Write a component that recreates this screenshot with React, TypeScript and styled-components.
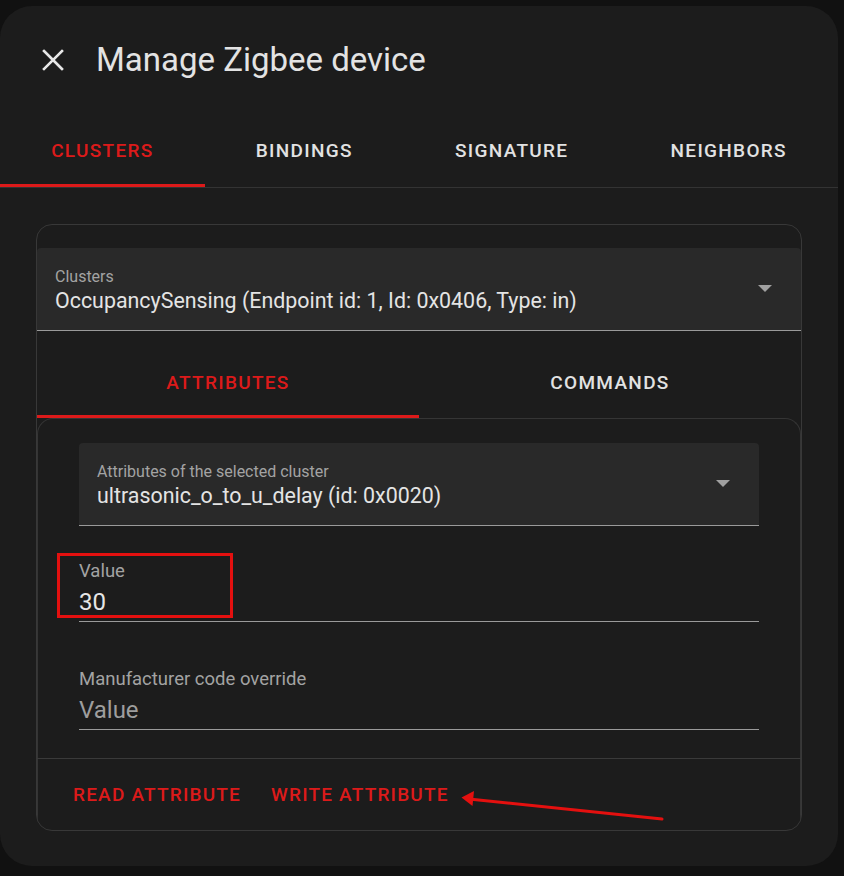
import React from "react";
import styled, { createGlobalStyle } from "styled-components";

const Global = createGlobalStyle`
  html, body { margin: 0; padding: 0; background: #111111; }
  body { font-family: Roboto, "Noto Sans", "Liberation Sans", sans-serif; -webkit-font-smoothing: antialiased; }
  #root { width: 844px; height: 876px; overflow: hidden; }
`;

const RED = "#dc1a1a";

const Dialog = styled.div`
  position: relative;
  margin-top: 6px;
  width: 838px;
  height: 860px;
  background: #1c1c1c;
  border-radius: 32px;
  box-sizing: border-box;
  overflow: hidden;
  color: #e2e2e2;
`;

const Header = styled.div`
  height: 108px;
  display: flex;
  align-items: center;
  padding-left: 42px;
  gap: 32px;
`;

const CloseIcon = styled.svg`
  width: 22px;
  height: 22px;
  flex: none;
`;

const Title = styled.h1`
  margin: 0;
  font-size: 33px;
  font-weight: 400;
  line-height: 40px;
  color: #e3e3e3;
`;

const TabBar = styled.div<{ $height: number; $border?: boolean }>`
  display: flex;
  height: ${(p) => p.$height}px;
  border-bottom: ${(p) => (p.$border ? "1px solid #333" : "none")};
`;

const Tab = styled.div<{ $active?: boolean; $equal?: boolean; $padTop?: number }>`
  position: relative;
  flex: ${(p) => (p.$equal ? "1 1 0" : "1 1 auto")};
  display: flex;
  align-items: center;
  justify-content: center;
  padding-top: ${(p) => p.$padTop ?? 0}px;
  box-sizing: border-box;
  font-size: 19px;
  font-weight: 500;
  letter-spacing: 1.3px;
  text-transform: uppercase;
  color: ${(p) => (p.$active ? RED : "#e2e2e2")};
  &::after {
    content: "";
    display: ${(p) => (p.$active ? "block" : "none")};
    position: absolute;
    left: 0;
    right: 0;
    bottom: 0;
    height: 3px;
    background: ${RED};
  }
`;

const Content = styled.div`
  padding: 36px 36px 0;
`;

const Card = styled.div`
  border: 1px solid #383838;
  border-radius: 16px;
  padding-top: 23px;
  overflow: hidden;
  height: 607px;
  box-sizing: border-box;
`;

const Select = styled.div`
  position: relative;
  height: 83px;
  box-sizing: border-box;
  background: #292929;
  border-bottom: 1px solid #9a9a9a;
  border-radius: 4px 4px 0 0;
  padding: 18px 18px 0;
`;

const SelectLabel = styled.div`
  font-size: 16px;
  line-height: 21px;
  color: #a3a3a3;
  white-space: nowrap;
`;

const SelectValue = styled.div`
  font-size: 21.4px;
  line-height: 28px;
  color: #e4e4e4;
  white-space: nowrap;
`;

const Caret = styled.span`
  position: absolute;
  right: 29px;
  top: 50%;
  margin-top: -4px;
  width: 0;
  height: 0;
  border-left: 7px solid transparent;
  border-right: 7px solid transparent;
  border-top: 7px solid #a0a0a0;
`;

const InnerCard = styled.div`
  border: 1px solid #353535;
  border-bottom: none;
  border-radius: 16px 16px 0 0;
  height: 420px;
  display: flex;
  flex-direction: column;
`;

const InnerBody = styled.div`
  padding: 24px 41px 0;
  display: flex;
  flex-direction: column;
`;

const TextField = styled.div<{ $mt: number }>`
  position: relative;
  margin-top: ${(p) => p.$mt}px;
  height: 78px;
  box-sizing: border-box;
  padding-top: 17px;
  border-bottom: 1px solid #9a9a9a;
`;

const InputLabel = styled.div`
  font-size: 18.5px;
  line-height: 21px;
  color: #a3a3a3;
  white-space: nowrap;
`;

const InputValue = styled.div<{ $placeholder?: boolean }>`
  margin-top: 6px;
  font-size: 24px;
  line-height: 28px;
  color: ${(p) => (p.$placeholder ? "#9e9e9e" : "#e6e6e6")};
  white-space: nowrap;
`;

const Highlight = styled.div`
  position: absolute;
  left: -22px;
  top: 9px;
  width: 176px;
  height: 65px;
  box-sizing: border-box;
  border: 3px solid #e4100f;
`;

const Actions = styled.div`
  margin-top: 28px;
  border-top: 1px solid #3a3a3a;
  height: 70px;
  display: flex;
  align-items: center;
  gap: 30px;
  padding-left: 36px;
  margin-left: -1px;
  margin-right: -1px;
`;

const TextButton = styled.button`
  background: none;
  border: none;
  padding: 0;
  font-family: inherit;
  font-size: 19px;
  font-weight: 500;
  letter-spacing: 1.2px;
  text-transform: uppercase;
  color: ${RED};
  cursor: pointer;
`;

const Pointer = styled.svg`
  position: absolute;
  left: 455px;
  top: 778px;
  width: 215px;
  height: 42px;
  overflow: visible;
`;

export default function App() {
  return (
    <>
      <Global />
      <Dialog>
        <Header>
          <CloseIcon viewBox="0 0 22 22">
            <path d="M2 2 L20 20 M20 2 L2 20" stroke="#e6e6e6" strokeWidth="2.6" strokeLinecap="square" fill="none" />
          </CloseIcon>
          <Title>Manage Zigbee device</Title>
        </Header>
        <TabBar $height={73} $border>
          <Tab $active>Clusters</Tab>
          <Tab>Bindings</Tab>
          <Tab>Signature</Tab>
          <Tab>Neighbors</Tab>
        </TabBar>
        <Content>
          <Card>
            <Select>
              <SelectLabel>Clusters</SelectLabel>
              <SelectValue>OccupancySensing (Endpoint id: 1, Id: 0x0406, Type: in)</SelectValue>
              <Caret />
            </Select>
            <TabBar $height={87}>
              <Tab $active $equal $padTop={16}>Attributes</Tab>
              <Tab $equal $padTop={16}>Commands</Tab>
            </TabBar>
            <InnerCard>
              <InnerBody>
                <Select>
                  <SelectLabel>Attributes of the selected cluster</SelectLabel>
                  <SelectValue>ultrasonic_o_to_u_delay (id: 0x0020)</SelectValue>
                  <Caret />
                </Select>
                <TextField $mt={18}>
                  <InputLabel>Value</InputLabel>
                  <InputValue>30</InputValue>
                  <Highlight />
                </TextField>
                <TextField $mt={30}>
                  <InputLabel>Manufacturer code override</InputLabel>
                  <InputValue $placeholder>Value</InputValue>
                </TextField>
              </InnerBody>
              <Actions>
                <TextButton>Read attribute</TextButton>
                <TextButton>Write attribute</TextButton>
              </Actions>
            </InnerCard>
          </Card>
        </Content>
        <Pointer viewBox="0 0 215 42">
          <line x1="14" y1="15" x2="207" y2="35" stroke="#e4100f" strokeWidth="3" strokeLinecap="round" />
          <polygon points="6.5,13.5 19,7 17.5,22" fill="#e4100f" />
        </Pointer>
      </Dialog>
    </>
  );
}
